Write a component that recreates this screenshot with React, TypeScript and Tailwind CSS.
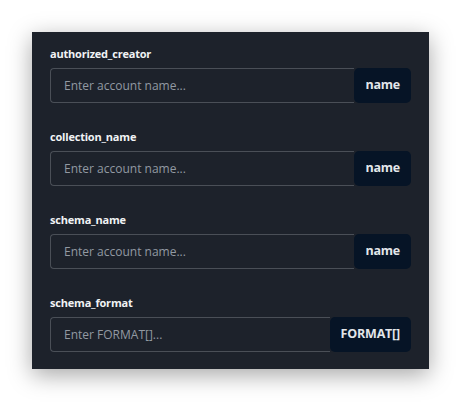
const fields = [
  { label: "authorized_creator", placeholder: "Enter account name...", addon: "name" },
  { label: "collection_name", placeholder: "Enter account name...", addon: "name" },
  { label: "schema_name", placeholder: "Enter account name...", addon: "name" },
  { label: "schema_format", placeholder: "Enter FORMAT[]...", addon: "FORMAT[]" },
];

export default function App() {
  return (
    <div className="min-h-screen bg-white p-8 font-['Open_Sans','Noto_Sans',sans-serif]">
      <div className="flex flex-col gap-[26px] bg-[#1d222b] px-[18px] pb-[17px] pt-[14px] shadow-[0_6px_22px_rgba(0,0,0,0.35)]">
        {fields.map((f) => (
          <div key={f.label} className="flex flex-col gap-[6px]">
            <label className="h-4 text-[11px] font-bold leading-4 tracking-[-0.2px] text-[#f1f3f5]">
              {f.label}
            </label>
            <div className="flex h-[35px]">
              <input
                placeholder={f.placeholder}
                className="min-w-0 flex-1 rounded-l-[4px] border border-r-0 border-[#4a4f57] bg-transparent px-[13px] text-[12px] text-white outline-none placeholder:text-[#9299a2]"
              />
              <span className="flex items-center rounded-[5px] bg-[#061426] px-[11px] text-[12.5px] font-bold tracking-[-0.2px] text-[#e3e6ea]">
                {f.addon}
              </span>
            </div>
          </div>
        ))}
      </div>
    </div>
  );
}
